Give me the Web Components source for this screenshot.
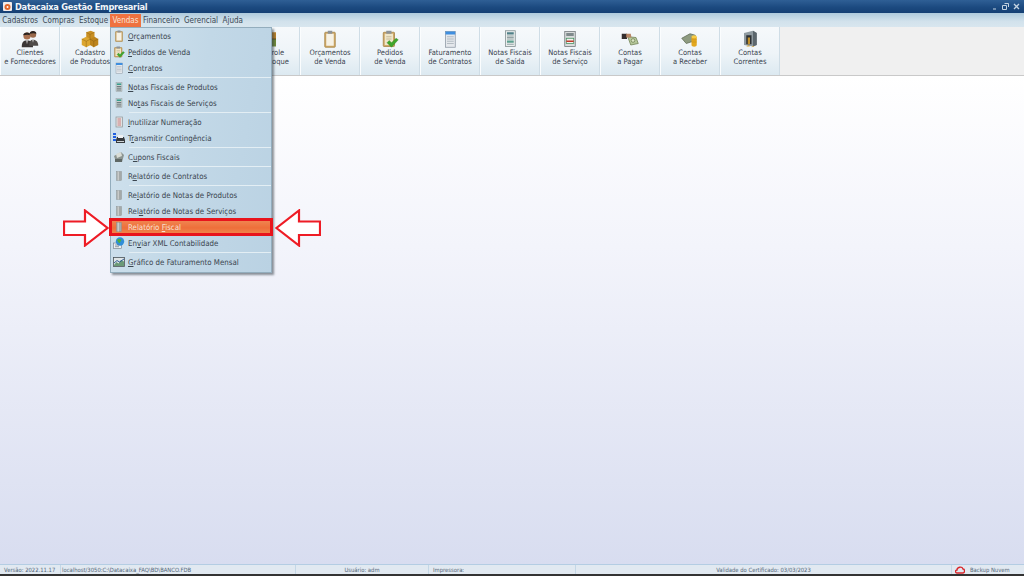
<!DOCTYPE html>
<html lang="pt">
<head>
<meta charset="utf-8">
<title>Datacaixa Gestão Empresarial</title>
<style>
html, body { margin:0; height:100%; overflow:hidden; }
body { font-family:"DejaVu Sans Condensed","DejaVu Sans",sans-serif; font-stretch:condensed; font-size:8px; color:#33404c; }
</style>
</head>
<body>
<dc-app></dc-app>

<script>
// icon drawings, 24 box for the toolbar and 12 box for the menu
const ICONS = {
  people:`<svg viewBox="0 0 24 24"><path d="M1 23c0-7 2-9 7-9s8 2 8 9z" fill="#3a3636"/><circle cx="8" cy="8" r="4.800" fill="#a9704f"/><path d="M3 7c0-5 10-5 10 0-3-1-6-1-10 0z" fill="#2a2320"/><path d="M11 21c0-6 2-8 5-8s7 2 7 8z" fill="#4f4b49"/><circle cx="16" cy="6" r="4.300" fill="#9a6a4c"/><path d="M11.500 5c0-5 9-5 9 0-3-1-5-1-9 0z" fill="#2a2320"/><path d="M7 14l1 5 1-5z" fill="#e8e8e8"/><path d="M15 13l1 4 1-4z" fill="#ddd"/></svg>`,
  boxes:`<svg viewBox="0 0 24 24"><path d="M7 3l6-2 5 2v7l-6 3-5-3z" fill="#c98f22"/><path d="M1 12l6-3 6 3v8l-6 3-6-3z" fill="#dca62f"/><path d="M12 12l6-3 5 3v8l-6 3-5-3z" fill="#bd841c"/><path d="M1 12l6 3v8M13 12l-6 3" fill="none" stroke="#946714" stroke-width=".7"/><path d="M12 12l5 3v8M23 12l-6 3" fill="none" stroke="#8f6212" stroke-width=".7"/><path d="M7 3l5 3v7M18 3l-6 3" fill="none" stroke="#946714" stroke-width=".7"/></svg>`,
  estoque:`<svg viewBox="0 0 24 24"><rect x="4" y="3" width="16" height="9" fill="#b7802a"/><rect x="4" y="12" width="16" height="10" fill="#6f8a3a"/><path d="M4 12h16" stroke="#4c3a1a"/></svg>`,
  clip:`<svg viewBox="0 0 24 24"><rect x="5" y="3" width="14" height="20" rx="1" fill="#cfa868" stroke="#a3803f"/><rect x="7" y="5" width="10" height="16" fill="#f6f2e6"/><rect x="9" y="1" width="6" height="4" fill="#8d9398"/></svg>`,
  clipok:`<svg viewBox="0 0 24 24"><rect x="3" y="3" width="15" height="19" rx="1" fill="#cfa868" stroke="#a3803f"/><rect x="5" y="5" width="11" height="15" fill="#efe6c9"/><rect x="7" y="1" width="7" height="4" fill="#8d9398"/><path d="M7 9h7M7 12h7" stroke="#b9ae8c"/><path d="M8 17l3-3 3 3 6-6 3 2-9 10z" fill="#3fa62c" stroke="#2a7c1b" stroke-width=".5"/></svg>`,
  contract:`<svg viewBox="0 0 24 24"><rect x="6" y="2" width="13" height="21" fill="#e4e8ec" stroke="#8b97a3"/><rect x="6" y="2" width="13" height="4" fill="#3f8fe0"/><path d="M8 9h9M8 12h9M8 15h9M8 18h9" stroke="#a4adb5"/></svg>`,
  nfsaida:`<svg viewBox="0 0 24 24"><rect x="6" y="1" width="13" height="21" fill="#e9edec" stroke="#7c8a8c"/><rect x="8" y="3" width="9" height="3" fill="#4f7f86"/><path d="M8 8h9M8 10h9M8 12h9" stroke="#76888c"/><rect x="8" y="14" width="9" height="3" fill="#5c9f8f"/><path d="M8 19h9" stroke="#76888c"/></svg>`,
  nfserv:`<svg viewBox="0 0 24 24"><rect x="5" y="2" width="14" height="20" fill="#d9dcdc" stroke="#6d7377"/><rect x="7" y="4" width="10" height="4" fill="#808a8c"/><rect x="7" y="11" width="10" height="7" fill="#f1f1ee" stroke="#3f8f5c"/><path d="M7 15h10" stroke="#c0392b" stroke-width="2"/></svg>`,
  pay:`<svg viewBox="0 0 24 24"><path d="M9 9l11 1 3 8-10 2z" fill="#b5c79a" stroke="#6d7f52"/><circle cx="16" cy="14" r="2.400" fill="#d9e4c4" stroke="#6d7f52"/><rect x="1" y="5" width="7" height="7" fill="#332e2e"/><path d="M7 5h6l1 5H7z" fill="#b98766"/></svg>`,
  recv:`<svg viewBox="0 0 24 24"><path d="M1 11l11-6 7 2v7l-12 4z" fill="#8e9b80" stroke="#5c6852"/><path d="M14 9h7v11c0 3-7 3-7 0z" fill="#e3a820"/><ellipse cx="17.500" cy="9" rx="3.500" ry="2" fill="#f6cb45"/><path d="M14 13h7M14 16h7" stroke="#c28a12" stroke-width=".6"/></svg>`,
  safe:`<svg viewBox="0 0 24 24"><path d="M4 4l12-3 5 3v16l-5 2-12-2z" fill="#8f9aa0"/><path d="M16 1l5 3v16l-5 2z" fill="#5c676d"/><rect x="7" y="7" width="7" height="12" fill="#2c3033"/><rect x="9" y="10" width="3" height="9" fill="#c4912a"/><path d="M7 22l3-2 2 2zM14 23l2-2 2 1z" fill="#d6a63a"/></svg>`,
  grey:`<svg viewBox="0 0 12 12"><rect x="3" y="1.500" width="6" height="9" fill="#c9d0d1" stroke="#8b9598" stroke-width=".4"/><path d="M3.800 3.200h4.400" stroke="#2f9b8c" stroke-width="1.500"/><path d="M3.800 5.500h4.400M3.800 7.200h4.400M3.800 9h4.400" stroke="#58666a" stroke-width=".8"/></svg>`,
  report:`<svg viewBox="0 0 12 12"><rect x="3.500" y="1.500" width="5" height="9" fill="#a4a9a9" stroke="#868b8c" stroke-width=".4"/><path d="M5.200 1.500v9" stroke="#e4e6e4" stroke-width=".8"/></svg>`,
  inut:`<svg viewBox="0 0 12 12"><rect x="3" y="1" width="6.500" height="10" fill="#dfe2e2" stroke="#8d9396" stroke-width=".7"/><path d="M4.500 3h3.500M4.500 5h3.500M4.500 7h3.500M4.500 9h3.500" stroke="#c66" stroke-width=".8"/></svg>`,
  trans:`<svg viewBox="0 0 12 12"><path d="M0 1h3v2H0zM0 4h3v2H0zM0 7h3v2H0z" fill="#1f5fe0"/><path d="M4 5h7l1 3v3H3V8z" fill="#363a3d"/><rect x="5" y="3" width="5" height="3" fill="#eef1f2"/><rect x="4" y="9" width="7" height="1" fill="#cfd4d6"/></svg>`,
  cupom:`<svg viewBox="0 0 12 12"><path d="M1 5l7-4 3 3-2 7H3z" fill="#8b9490"/><path d="M3 3l5-2 1 4-5 2z" fill="#d9ddd6"/><path d="M2 8h7v3H2z" fill="#5f6865"/></svg>`,
  xml:`<svg viewBox="0 0 12 12"><rect x=".5" y="6" width="8" height="5.500" fill="#eceff1" stroke="#6d7a85" stroke-width=".6"/><circle cx="7" cy="4.500" r="4.200" fill="#2f8ed8"/><path d="M4 3c2-2 3 0 4-1 1 2-1 2-1 4-2 0-2-2-3-3z" fill="#4fae3c"/><path d="M2 8h4M2 9.700h4" stroke="#6d7a85" stroke-width=".7"/></svg>`,
  chart:`<svg viewBox="0 0 12 12"><rect x=".5" y="1.500" width="11" height="9" fill="#dfe5e6" stroke="#4a5358" stroke-width=".8"/><path d="M1 9l2.500-3 2 1.500L8 4l3 1.500v4.500H1z" fill="#6b9a78"/><path d="M1 7l3-2.500 2.500 1.500L11 3" fill="none" stroke="#1f4f8f" stroke-width=".9"/></svg>`
};

// one item of the toolbar, label comes through the slot
const tplTool = document.createElement("template");
tplTool.innerHTML = `
<style>
:host { display:flex; flex-direction:column; align-items:center; box-sizing:border-box; width:60px; height:48px; padding-top:3px;
  background:linear-gradient(#f6f9fb,#eef4f8 55%,#dce9f1); border-right:1px solid #cfdde6; border-left:1px solid #fbfdfe; font-size:7.500px; line-height:9.300px; text-align:center; color:#3a4450; white-space:nowrap; }
.ic { width:18px; height:18px; margin-bottom:0; }
.ic svg { width:18px; height:18px; display:block; }
</style>
<div class="ic"></div><div><slot></slot></div>`;
class DcTool extends HTMLElement {
  constructor(){
    super();
    this.attachShadow({mode:"open"}).appendChild(tplTool.content.cloneNode(true));
  }
  connectedCallback(){
    this.shadowRoot.querySelector(".ic").innerHTML = ICONS[this.getAttribute("icon")] || "";
  }
}
customElements.define("dc-tool", DcTool);

// line of the popup menu
const tplItem = document.createElement("template");
tplItem.innerHTML = `
<style>
:host { display:flex; align-items:center; height:16px; box-sizing:border-box; padding-left:2px; white-space:nowrap; font-size:7.850px; color:#3b4650; position:relative; }
:host([active]) { background:linear-gradient(#f08a55,#ee6f3a 55%,#f28a4f); color:#f7e3d6; outline:3px solid #e8141c; outline-offset:-2px; z-index:1; margin:0 -1px; padding-left:3px; }
.ic { width:12px; height:12px; margin-right:3px; flex:none; }
.ic svg { width:12px; height:12px; display:block; }
</style>
<div class="ic"></div><span><slot></slot></span>`;
class DcItem extends HTMLElement {
  constructor(){
    super();
    this.attachShadow({mode:"open"}).appendChild(tplItem.content.cloneNode(true));
  }
  connectedCallback(){
    this.shadowRoot.querySelector(".ic").innerHTML = ICONS[this.getAttribute("icon")] || "";
  }
}
customElements.define("dc-item", DcItem);

// separator of the popup menu
class DcSep extends HTMLElement {
  constructor(){
    super();
    this.attachShadow({mode:"open"}).innerHTML = `<style>
:host { display:block; height:3px; box-sizing:border-box; margin-left:18px; padding-top:1px; }
div { height:1px; background:#e3eef4; }
</style><div></div>`;
  }
}
customElements.define("dc-sep", DcSep);

// hollow red arrow on top of the screenshot
class DcArrow extends HTMLElement {
  constructor(){
    super();
    this.attachShadow({mode:"open"}).innerHTML = `<style>
:host { display:block; position:absolute; width:46px; height:38px; }
svg { display:block; }
</style><svg width="46" height="38" viewBox="0 0 46 38"><path d="M1 12.500H22V1.500L44.500 19 22 36.500V26H1z" fill="#fff" stroke="#ee1c25" stroke-width="2.200"/></svg>`;
  }
}
customElements.define("dc-arrow", DcArrow);

// title bar
class DcTitle extends HTMLElement {
  constructor(){
    super();
    this.attachShadow({mode:"open"}).innerHTML = `<style>
:host { display:flex; align-items:center; height:13px; padding:0 4px 0 3px; background:linear-gradient(#2f5f95,#1c4a80 55%,#143f73); color:#f1f5f9; }
.logo { width:9px; height:9px; margin-right:3px; }
b { font-weight:700; font-size:9.200px; letter-spacing:-.28px; flex:1; }
.btns { display:flex; gap:4px; align-items:center; }
</style>
<svg class="logo" viewBox="0 0 9 9"><rect width="9" height="9" rx="1" fill="#f3ecea"/><circle cx="4.500" cy="5" r="3" fill="#e2662a"/><circle cx="4.500" cy="5" r="1" fill="#fff"/></svg>
<b>Datacaixa Gestão Empresarial</b>
<div class="btns">
<svg width="6" height="6" viewBox="0 0 6 6"><path d="M1 5h3" stroke="#c3d2e1"/></svg>
<svg width="7" height="7" viewBox="0 0 7 7"><path d="M2.500 .5h4v3.500M.5 2.500h4v4h-4z" fill="none" stroke="#c3d2e1"/></svg>
<svg width="7" height="7" viewBox="0 0 7 7"><path d="M1 1l5 5M6 1L1 6" stroke="#c3d2e1" stroke-width="1.300"/></svg>
</div>`;
  }
}
customElements.define("dc-title", DcTitle);

// menu bar
class DcMenubar extends HTMLElement {
  constructor(){
    super();
    const names = ["Cadastros","Compras","Estoque","Vendas","Financeiro","Gerencial","Ajuda"];
    this.attachShadow({mode:"open"}).innerHTML = `<style>
:host { display:flex; align-items:center; height:14px; padding-left:0; background:linear-gradient(#aecadc,#d2e2ec 60%,#d8e6ef); color:#3a4854; }
span { padding:0 2.200px; line-height:13px; }
.on { background:#ef7240; color:#f8e4d8; }
</style>` + names.map(n => `<span class="${n=="Vendas"?"on":""}">${n}</span>`).join("");
  }
}
customElements.define("dc-menubar", DcMenubar);

// status bar cell
class DcCell extends HTMLElement {
  constructor(){
    super();
    this.attachShadow({mode:"open"}).innerHTML = `<style>
:host { display:flex; align-items:center; box-sizing:border-box; height:100%; border-right:1px solid #c4d7e6; padding:0 4px; white-space:nowrap; overflow:hidden; }
:host([center]) { justify-content:center; }
:host([tight]) { padding-left:1px; }
:host(:last-child) { border-right:0; }
</style><slot></slot>`;
  }
}
customElements.define("dc-cell", DcCell);

// status bar
class DcStatus extends HTMLElement {
  constructor(){
    super();
    this.attachShadow({mode:"open"}).innerHTML = `<style>
:host { display:grid; grid-template-columns:61px 235px 133px 147px 376px 72px; height:10px; box-sizing:border-box; border-top:1px solid #b4cde3; background:#e1e9f1; color:#55687a; font-size:5.850px; }
</style><slot></slot>`;
  }
}
customElements.define("dc-status", DcStatus);

// popup menu
class DcMenu extends HTMLElement {
  constructor(){
    super();
    this.attachShadow({mode:"open"}).innerHTML = `<style>
:host { display:block; position:absolute; left:110px; top:27px; width:162px; height:246px; box-sizing:border-box;
  background:linear-gradient(100deg,#d2e3ee,#c2d8e7 50%,#bad2e3); border:1px solid #93adbd; box-shadow:2px 2px 2px rgba(50,60,70,.55); }
</style><slot></slot>`;
  }
}
customElements.define("dc-menu", DcMenu);

// whole window
class DcApp extends HTMLElement {
  constructor(){
    super();
    this.attachShadow({mode:"open"}).innerHTML = `<style>
:host { display:flex; flex-direction:column; position:relative; width:1024px; height:576px; overflow:hidden; }
.tools { display:flex; height:49px; box-sizing:border-box; background:#f0f0f0; border-bottom:1px solid #c9c9c9; }
.work { flex:1; background:linear-gradient(#fff,#f3f4fb 35%,#d8ddf0); }
.foot { height:2px; background:#333; }
</style>
<dc-title></dc-title>
<dc-menubar></dc-menubar>
<div class="tools">
<dc-tool icon="people">Clientes<br>e Fornecedores</dc-tool>
<dc-tool icon="boxes">Cadastro<br>de Produtos</dc-tool>
<dc-tool></dc-tool>
<dc-tool></dc-tool>
<dc-tool icon="estoque">Controle<br>de Estoque</dc-tool>
<dc-tool icon="clip">Orçamentos<br>de Venda</dc-tool>
<dc-tool icon="clipok">Pedidos<br>de Venda</dc-tool>
<dc-tool icon="contract">Faturamento<br>de Contratos</dc-tool>
<dc-tool icon="nfsaida">Notas Fiscais<br>de Saída</dc-tool>
<dc-tool icon="nfserv">Notas Fiscais<br>de Serviço</dc-tool>
<dc-tool icon="pay">Contas<br>a Pagar</dc-tool>
<dc-tool icon="recv">Contas<br>a Receber</dc-tool>
<dc-tool icon="safe">Contas<br>Correntes</dc-tool>
</div>
<div class="work"></div>
<dc-status>
<dc-cell>Versão: 2022.11.17</dc-cell>
<dc-cell tight>localhost/3050:C:\\Datacaixa_FAQ\\BD\\BANCO.FDB</dc-cell>
<dc-cell center>Usuário: adm</dc-cell>
<dc-cell>Impressora:</dc-cell>
<dc-cell center>Validade do Certificado: 03/03/2023</dc-cell>
<dc-cell tight><svg width="10" height="8" viewBox="0 0 10 8" style="margin:0 5px 0 2px"><path d="M2 7C0 7 0 4 2 4c0-3 5-4 6-1 2 0 2 4 0 4z" fill="none" stroke="#d9262b" stroke-width="1.300"/></svg>Backup Nuvem</dc-cell>
</dc-status>
<div class="foot"></div>
<dc-menu>
<dc-item icon="clip"><u>O</u>rçamentos</dc-item>
<dc-item icon="clipok"><u>P</u>edidos de Venda</dc-item>
<dc-item icon="contract"><u>C</u>ontratos</dc-item>
<dc-sep></dc-sep>
<dc-item icon="grey"><u>N</u>otas Fiscais de Produtos</dc-item>
<dc-item icon="grey">No<u>t</u>as Fiscais de Serviços</dc-item>
<dc-sep></dc-sep>
<dc-item icon="inut"><u>I</u>nutilizar Numeração</dc-item>
<dc-item icon="trans">T<u>r</u>ansmitir Contingência</dc-item>
<dc-sep></dc-sep>
<dc-item icon="cupom">C<u>u</u>pons Fiscais</dc-item>
<dc-sep></dc-sep>
<dc-item icon="report">R<u>e</u>latório de Contratos</dc-item>
<dc-sep></dc-sep>
<dc-item icon="report">Re<u>l</u>atório de Notas de Produtos</dc-item>
<dc-item icon="report">Rel<u>a</u>tório de Notas de Serviços</dc-item>
<dc-item icon="report" active>Relatório <u>F</u>iscal</dc-item>
<dc-item icon="xml">En<u>v</u>iar XML Contabilidade</dc-item>
<dc-sep></dc-sep>
<dc-item icon="chart"><u>G</u>ráfico de Faturamento Mensal</dc-item>
</dc-menu>
<dc-arrow style="left:63px;top:209px"></dc-arrow>
<dc-arrow style="left:275px;top:209px;transform:scaleX(-1)"></dc-arrow>`;
  }
}
customElements.define("dc-app", DcApp);
</script>
</body>
</html>
